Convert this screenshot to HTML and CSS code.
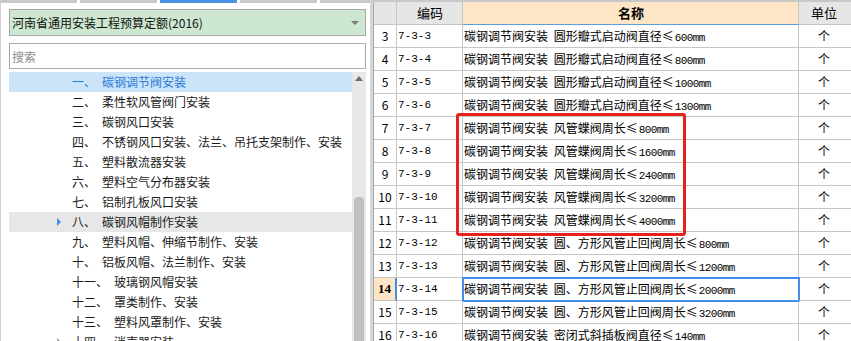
FILE: index.html
```html
<!DOCTYPE html>
<html lang="zh-CN">
<head>
    <meta charset="UTF-8">
    <meta name="viewport" content="width=device-width, initial-scale=1.0">
    <title>定额库</title>
    <link rel="stylesheet" href="styles.css">
</head>
<body>
    <div class="left">
        <div class="tabs">
            <span></span><span></span><span class="on"></span><span></span><span></span>
        </div>
        <div class="picker">
            <div class="select">河南省通用安装工程预算定额(2016)<i class="caret"></i></div>
            <input class="search" type="text" placeholder="搜索">
            <div class="tree-box">
                <ul class="tree">
                    <li class="sel"><span class="no">一、</span>碳钢调节阀安装</li>
                    <li><span class="no">二、</span>柔性软风管阀门安装</li>
                    <li><span class="no">三、</span>碳钢风口安装</li>
                    <li><span class="no">四、</span>不锈钢风口安装、法兰、吊托支架制作、安装</li>
                    <li><span class="no">五、</span>塑料散流器安装</li>
                    <li><span class="no">六、</span>塑料空气分布器安装</li>
                    <li><span class="no">七、</span>铝制孔板风口安装</li>
                    <li class="hover open"><span class="no">八、</span>碳钢风帽制作安装</li>
                    <li><span class="no">九、</span>塑料风帽、伸缩节制作、安装</li>
                    <li><span class="no">十、</span>铝板风帽、法兰制作、安装</li>
                    <li><span class="no">十一、</span>玻璃钢风帽安装</li>
                    <li><span class="no">十二、</span>罩类制作、安装</li>
                    <li><span class="no">十三、</span>塑料风罩制作、安装</li>
                    <li class="closed"><span class="no">十四、</span>消声器安装</li>
                </ul>
                <div class="vscroll">
                    <span class="up"></span>
                    <span class="thumb"></span>
                </div>
            </div>
        </div>
    </div>

    <div class="right">
        <div class="row head">
            <div class="c rn"></div>
            <div class="c code">编码</div>
            <div class="c name">名称</div>
            <div class="c unit">单位</div>
        </div>
        <div class="row"><div class="c rn">3</div><div class="c code">7-3-3</div><div class="c name">碳钢调节阀安装 圆形瓣式启动阀直径≤<span class="mm">600mm</span></div><div class="c unit">个</div></div>
        <div class="row"><div class="c rn">4</div><div class="c code">7-3-4</div><div class="c name">碳钢调节阀安装 圆形瓣式启动阀直径≤<span class="mm">800mm</span></div><div class="c unit">个</div></div>
        <div class="row"><div class="c rn">5</div><div class="c code">7-3-5</div><div class="c name">碳钢调节阀安装 圆形瓣式启动阀直径≤<span class="mm">1000mm</span></div><div class="c unit">个</div></div>
        <div class="row"><div class="c rn">6</div><div class="c code">7-3-6</div><div class="c name">碳钢调节阀安装 圆形瓣式启动阀直径≤<span class="mm">1300mm</span></div><div class="c unit">个</div></div>
        <div class="row"><div class="c rn">7</div><div class="c code">7-3-7</div><div class="c name">碳钢调节阀安装 风管蝶阀周长≤<span class="mm">800mm</span></div><div class="c unit">个</div></div>
        <div class="row"><div class="c rn">8</div><div class="c code">7-3-8</div><div class="c name">碳钢调节阀安装 风管蝶阀周长≤<span class="mm">1600mm</span></div><div class="c unit">个</div></div>
        <div class="row"><div class="c rn">9</div><div class="c code">7-3-9</div><div class="c name">碳钢调节阀安装 风管蝶阀周长≤<span class="mm">2400mm</span></div><div class="c unit">个</div></div>
        <div class="row"><div class="c rn">10</div><div class="c code">7-3-10</div><div class="c name">碳钢调节阀安装 风管蝶阀周长≤<span class="mm">3200mm</span></div><div class="c unit">个</div></div>
        <div class="row"><div class="c rn">11</div><div class="c code">7-3-11</div><div class="c name">碳钢调节阀安装 风管蝶阀周长≤<span class="mm">4000mm</span></div><div class="c unit">个</div></div>
        <div class="row"><div class="c rn">12</div><div class="c code">7-3-12</div><div class="c name">碳钢调节阀安装 圆、方形风管止回阀周长≤<span class="mm">800mm</span></div><div class="c unit">个</div></div>
        <div class="row"><div class="c rn">13</div><div class="c code">7-3-13</div><div class="c name">碳钢调节阀安装 圆、方形风管止回阀周长≤<span class="mm">1200mm</span></div><div class="c unit">个</div></div>
        <div class="row current"><div class="c rn">14</div><div class="c code">7-3-14</div><div class="c name">碳钢调节阀安装 圆、方形风管止回阀周长≤<span class="mm">2000mm</span></div><div class="c unit">个</div></div>
        <div class="row"><div class="c rn">15</div><div class="c code">7-3-15</div><div class="c name">碳钢调节阀安装 圆、方形风管止回阀周长≤<span class="mm">3200mm</span></div><div class="c unit">个</div></div>
        <div class="row"><div class="c rn">16</div><div class="c code">7-3-16</div><div class="c name">碳钢调节阀安装 密闭式斜插板阀直径≤<span class="mm">140mm</span></div><div class="c unit">个</div></div>

        <div class="mark"></div>
    </div>
</body>
</html>
```

FILE: styles.css
```css
* {
    box-sizing: border-box;
}
html, body {
    margin: 0;
    height: 341px;
    overflow: hidden;
}
body {
    display: flex;
    font-family: "Noto Sans CJK SC", "Liberation Sans", sans-serif;
    font-size: 12px;
    color: #000;
    background: #fff;
}

/* left pane */
.left {
    width: 370px;
    flex: none;
    border-left: 1px solid #d0d0d0;
    display: flex;
    flex-direction: column;
}
.tabs {
    display: flex;
    gap: 3px;
    height: 3px;
    margin-left: -1px;
}
.tabs span {
    width: 77px;
    background: #c9c9c9;
}
.tabs span.on {
    background: #4a90e2;
}
.tabs span:last-child {
    flex: 1;
}
.picker {
    padding: 6px 4px 0 8px;
    display: flex;
    flex-direction: column;
    flex: 1;
    min-height: 0;
}
.select {
    height: 27px;
    line-height: 25px;
    border: 1px solid #a9a9a9;
    background: #cde7d1;
    padding-left: 2px;
    position: relative;
    color: #111;
}
.caret {
    position: absolute;
    right: 6px;
    top: 11px;
    border-top: 4px solid #7a7a7a;
    border-left: 4px solid transparent;
    border-right: 4px solid transparent;
}
.search {
    margin-top: 7px;
    height: 26px;
    border: 1px solid #a9a9a9;
    padding: 0 2px;
    font: inherit;
    outline: none;
}
.search::placeholder {
    color: #8c8c8c;
}
.tree-box {
    margin-top: 3px;
    display: flex;
    flex: 1;
    min-height: 0;
}
.tree {
    list-style: none;
    margin: 0;
    padding: 0;
    flex: 1;
}
.tree li {
    position: relative;
    height: 20px;
    line-height: 20px;
    padding-left: 63px;
    white-space: nowrap;
    color: #1a1a1a;
}
.tree .no {
    margin-right: 6px;
}
.tree li.sel {
    background: #cce4f7;
    color: #2a7ad8;
}
.tree li.hover {
    background: #e7e7e7;
}
.tree li.open::before,
.tree li.closed::before {
    content: "";
    position: absolute;
    left: 48px;
    top: 6px;
    border-left: 4px solid #3d8fe6;
    border-top: 4px solid transparent;
    border-bottom: 4px solid transparent;
}
.tree li.closed::before {
    border-left-color: #a6a6a6;
}
.vscroll {
    width: 14px;
    flex: none;
    background: #e8e8e8;
    position: relative;
}
.vscroll .up {
    position: absolute;
    left: 3px;
    top: 4px;
    border-bottom: 5px solid #6e6e6e;
    border-left: 4px solid transparent;
    border-right: 4px solid transparent;
}
.vscroll .thumb {
    position: absolute;
    left: 2px;
    right: 2px;
    top: 125px;
    height: 200px;
    border-radius: 4px 4px 0 0;
    background: #c1c1c1;
}

/* right pane */
.right {
    flex: 1;
    position: relative;
    border-left: 3px solid #d6d6d6;
    border-top: 2px solid #c8c8c8;
    box-shadow: inset 1px 0 0 #a8a8a8;
}
.row {
    display: grid;
    grid-template-columns: 23px 66px 336px 1fr;
    height: 23px;
    margin-left: 1px;
}
.c {
    border-right: 1px solid #c6c6c6;
    border-bottom: 1px solid #c6c6c6;
    line-height: 22px;
    white-space: nowrap;
    overflow: hidden;
}
.rn {
    text-align: center;
}
.code {
    padding-left: 1px;
    font-family: "Liberation Mono", monospace;
    font-size: 11px;
}
.name {
    padding-left: 1px;
    word-spacing: 3px;
}
.name .mm {
    font-family: "Liberation Mono", monospace;
    font-size: 11px;
    letter-spacing: -0.6px;
    margin-left: 1px;
}
.unit {
    text-align: center;
    border-right: none;
    padding-right: 2px;
}
.head .c {
    background: #e6e6e6;
    text-align: center;
    font-size: 13px;
    font-family: "Noto Sans CJK SC", sans-serif;
}
.head .name {
    background: #fde5c6;
    font-weight: bold;
    border-bottom: 1px solid #5d9be4;
}
.current .rn {
    background: #fde5c6;
    font-weight: bold;
    font-family: "Liberation Serif", serif;
    font-size: 13px;
    border-right: 2px solid #3d8fe6;
}
.current .name {
    outline: 2px solid #3f8fe8;
    outline-offset: -1px;
}

/* red note frame over rows 7-11 */
.mark {
    position: absolute;
    left: 83px;
    top: 111px;
    width: 230px;
    height: 123px;
    border: 3px solid #e5221d;
    border-radius: 3px;
}
```
